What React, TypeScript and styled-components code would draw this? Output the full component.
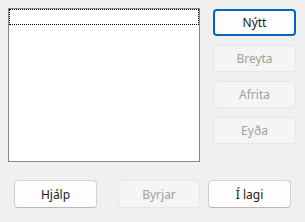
import React from "react";
import styled, { createGlobalStyle } from "styled-components";

const Global = createGlobalStyle`
  html, body {
    margin: 0;
    padding: 0;
    background: #f0f0f0;
    font-family: "Segoe UI", "Noto Sans", "Open Sans", sans-serif;
    font-size: 12px;
  }
`;

const Dialog = styled.div`
  width: 305px;
  height: 222px;
  box-sizing: border-box;
  padding-top: 8px;
`;

const TopRow = styled.div`
  display: flex;
  flex-direction: row;
  align-items: flex-start;
  padding-left: 8px;
`;

const ListBox = styled.div`
  width: 192px;
  height: 154px;
  box-sizing: border-box;
  border: 1px solid #828790;
  background: #ffffff;
`;

const FocusRow = styled.div`
  height: 16px;
  box-sizing: border-box;
  border: 1px dotted #000000;
`;

const SideButtons = styled.div`
  display: flex;
  flex-direction: column;
  gap: 9px;
  margin-left: 13px;
  margin-top: 1px;
`;

const BottomRow = styled.div`
  display: flex;
  flex-direction: row;
  margin-top: 18px;
  padding-left: 14px;
`;

const Button = styled.button<{ $focused?: boolean; $gap?: number; $width?: number }>`
  width: ${(p) => p.$width ?? 83}px;
  height: 28px;
  margin-left: ${(p) => p.$gap ?? 0}px;
  box-sizing: border-box;
  padding: 0;
  font-family: inherit;
  font-size: 12px;
  color: #1b1b1b;
  background: #fdfdfd;
  border: 1px solid #d0d0d0;
  border-bottom-color: #b8b8b8;
  border-radius: 4px;
  ${(p) =>
    p.$focused &&
    `
    border: 2px solid #0067c0;
  `}
  &:disabled {
    color: #a0a0a0;
    background: #f5f5f5;
    border: 1px solid #e5e5e5;
  }
`;

const SideButton = styled(Button)`
  height: 27px;
`;

export default function App() {
  return (
    <Dialog>
      <Global />
      <TopRow>
        <ListBox>
          <FocusRow />
        </ListBox>
        <SideButtons>
          <SideButton $focused>Nýtt</SideButton>
          <SideButton disabled>Breyta</SideButton>
          <SideButton disabled>Afrita</SideButton>
          <SideButton disabled>Eyða</SideButton>
        </SideButtons>
      </TopRow>
      <BottomRow>
        <Button>Hjálp</Button>
        <Button disabled $gap={21} $width={82}>Byrjar</Button>
        <Button $gap={8}>Í lagi</Button>
      </BottomRow>
    </Dialog>
  );
}
